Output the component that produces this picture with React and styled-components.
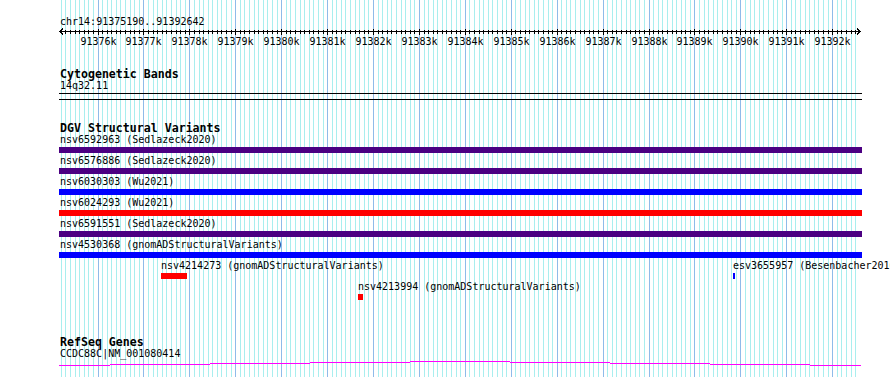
import React from "react";
import styled, { createGlobalStyle } from "styled-components";

const START = 91375190;
const END = 91392642;
const PANEL_W = 803;
const PX_PER_BP = 0.04592;

// x inside the track panel for a genome position
const toX = (bp) => 38.5 + (bp - 91376000) * PX_PER_BP;

const GlobalStyle = createGlobalStyle`
  html, body {
    margin: 0;
    padding: 0;
    background: #fff;
  }
  body {
    font-family: "DejaVu Sans Mono", "Liberation Mono", monospace;
    color: #000;
  }
`;

const Page = styled.div`
  width: 890px;
  height: 377px;
  overflow: hidden;
  padding-left: 59px;
  box-sizing: border-box;
`;

const Panel = styled.div`
  position: relative;
  width: ${PANEL_W}px;
  height: 377px;
`;

const GridLayer = styled.svg`
  position: absolute;
  top: 0;
  left: 0;
  z-index: 0;
`;

const Content = styled.div`
  position: relative;
  z-index: 1;
  display: flex;
  flex-direction: column;
  white-space: nowrap;
`;

const Location = styled.div`
  margin-top: 16px;
  padding-left: 1px;
  font-size: 10px;
  line-height: 12px;
`;

const RulerSvg = styled.svg`
  display: block;
  overflow: visible;
`;

const TrackTitle = styled.div`
  margin-top: ${(p) => p.$top}px;
  padding-left: 1px;
  font-size: 11.6px;
  font-weight: bold;
  line-height: 12px;
`;

const SubLabel = styled.div`
  padding-left: 1px;
  font-size: 10px;
  line-height: 12px;
`;

const Separator = styled.div`
  height: 1px;
  background: #000;
  margin-top: ${(p) => p.$top}px;
`;

const VariantRow = styled.div`
  display: flex;
  flex-direction: column;
  height: 21px;
`;

const Bar = styled.div`
  height: 6px;
  margin-top: 1px;
  background: ${(p) => p.$color};
`;

const FeatureRow = styled.div`
  position: relative;
  height: 21px;
`;

const Feature = styled.div`
  position: absolute;
  top: 0;
  display: flex;
  flex-direction: column;
`;

const FeatureBar = styled.div`
  height: 6px;
  margin-top: 1px;
  background: ${(p) => p.$color};
`;

const GeneSvg = styled.svg`
  display: block;
`;

const PURPLE = "#4b0082";
const BLUE = "#0000ff";
const RED = "#ff0000";

const variants = [
  { name: "nsv6592963 (Sedlazeck2020)", color: PURPLE },
  { name: "nsv6576886 (Sedlazeck2020)", color: PURPLE },
  { name: "nsv6030303 (Wu2021)", color: BLUE },
  { name: "nsv6024293 (Wu2021)", color: RED },
  { name: "nsv6591551 (Sedlazeck2020)", color: PURPLE },
  { name: "nsv4530368 (gnomADStructuralVariants)", color: BLUE },
];

const packed = [
  [
    { name: "nsv4214273 (gnomADStructuralVariants)", left: 101, width: 26, color: RED },
    { name: "esv3655957 (Besenbacher2016)", left: 673, width: 2, color: BLUE },
  ],
  [{ name: "nsv4213994 (gnomADStructuralVariants)", left: 298, width: 5, color: RED }],
];

const Grid = () => {
  const lines = [];
  for (let bp = 91375200; bp < END; bp += 100) {
    const x = Math.round(toX(bp)) + 0.5;
    if (x > PANEL_W - 4) break;
    const major = bp % 1000 === 0;
    lines.push(
      <line
        key={bp}
        x1={x}
        x2={x}
        y1={0}
        y2={377}
        stroke={major ? "#8fbbe9" : "#a9eeee"}
        strokeWidth={1}
      />
    );
  }
  return (
    <GridLayer width={PANEL_W} height={377} shapeRendering="crispEdges">
      {lines}
    </GridLayer>
  );
};

const Ruler = () => {
  const ticks = [];
  const labels = [];
  for (let bp = 91375200; bp < END; bp += 100) {
    const x = Math.round(toX(bp)) + 0.5;
    if (x < 2 || x > PANEL_W - 3) continue;
    const major = bp % 1000 === 0;
    ticks.push(
      <line key={bp} x1={x} x2={x} y1={major ? 0.5 : 1.5} y2={major ? 6.5 : 5.5} stroke="#000" />
    );
    if (major) {
      labels.push(
        <text key={"l" + bp} x={x} y={17} textAnchor="middle" fontSize="10">
          {bp / 1000}k
        </text>
      );
    }
  }
  return (
    <RulerSvg width={PANEL_W} height={20} shapeRendering="crispEdges">
      <line x1={1} x2={PANEL_W - 1} y1={3.5} y2={3.5} stroke="#000" />
      <polyline points="4,0.5 1,3.5 4,6.5" fill="none" stroke="#000" />
      <polyline points={`${PANEL_W - 5},0.5 ${PANEL_W - 2},3.5 ${PANEL_W - 5},6.5`} fill="none" stroke="#000" />
      {ticks}
      {labels}
    </RulerSvg>
  );
};

const geneSteps = [
  [0, 51, 5.5],
  [51, 151, 4.5],
  [151, 251, 3.5],
  [251, 351, 2.5],
  [351, 451, 1.5],
  [451, 551, 2.5],
  [551, 651, 3.5],
  [651, 751, 4.5],
  [751, 802, 5.5],
];

const GeneModel = () => (
  <GeneSvg width={PANEL_W} height={8} shapeRendering="crispEdges">
    {geneSteps.map(([a, b, y], i) => (
      <line key={i} x1={a} x2={b} y1={y} y2={y} stroke="#ff00ff" />
    ))}
  </GeneSvg>
);

const App = () => {
  return (
    <>
      <GlobalStyle />
      <Page>
        <Panel>
          <Grid />
          <Content>
            <Location>
              chr14:{START}..{END}
            </Location>
            <Ruler />

            <TrackTitle $top={20}>Cytogenetic Bands</TrackTitle>
            <SubLabel>14q32.11</SubLabel>
            <Separator $top={1} />
            <Separator $top={5} />

            <TrackTitle $top={22}>DGV Structural Variants</TrackTitle>
            {variants.map((v) => (
              <VariantRow key={v.name}>
                <SubLabel>{v.name}</SubLabel>
                <Bar $color={v.color} />
              </VariantRow>
            ))}
            {packed.map((row, i) => (
              <FeatureRow key={i}>
                {row.map((f) => (
                  <Feature key={f.name} style={{ left: f.left }}>
                    <SubLabel>{f.name}</SubLabel>
                    <FeatureBar $color={f.color} style={{ width: f.width, marginLeft: 1 }} />
                  </Feature>
                ))}
              </FeatureRow>
            ))}

            <TrackTitle $top={34}>RefSeq Genes</TrackTitle>
            <SubLabel>CCDC88C|NM_001080414</SubLabel>
            <GeneModel />
          </Content>
        </Panel>
      </Page>
    </>
  );
};

export default App;
